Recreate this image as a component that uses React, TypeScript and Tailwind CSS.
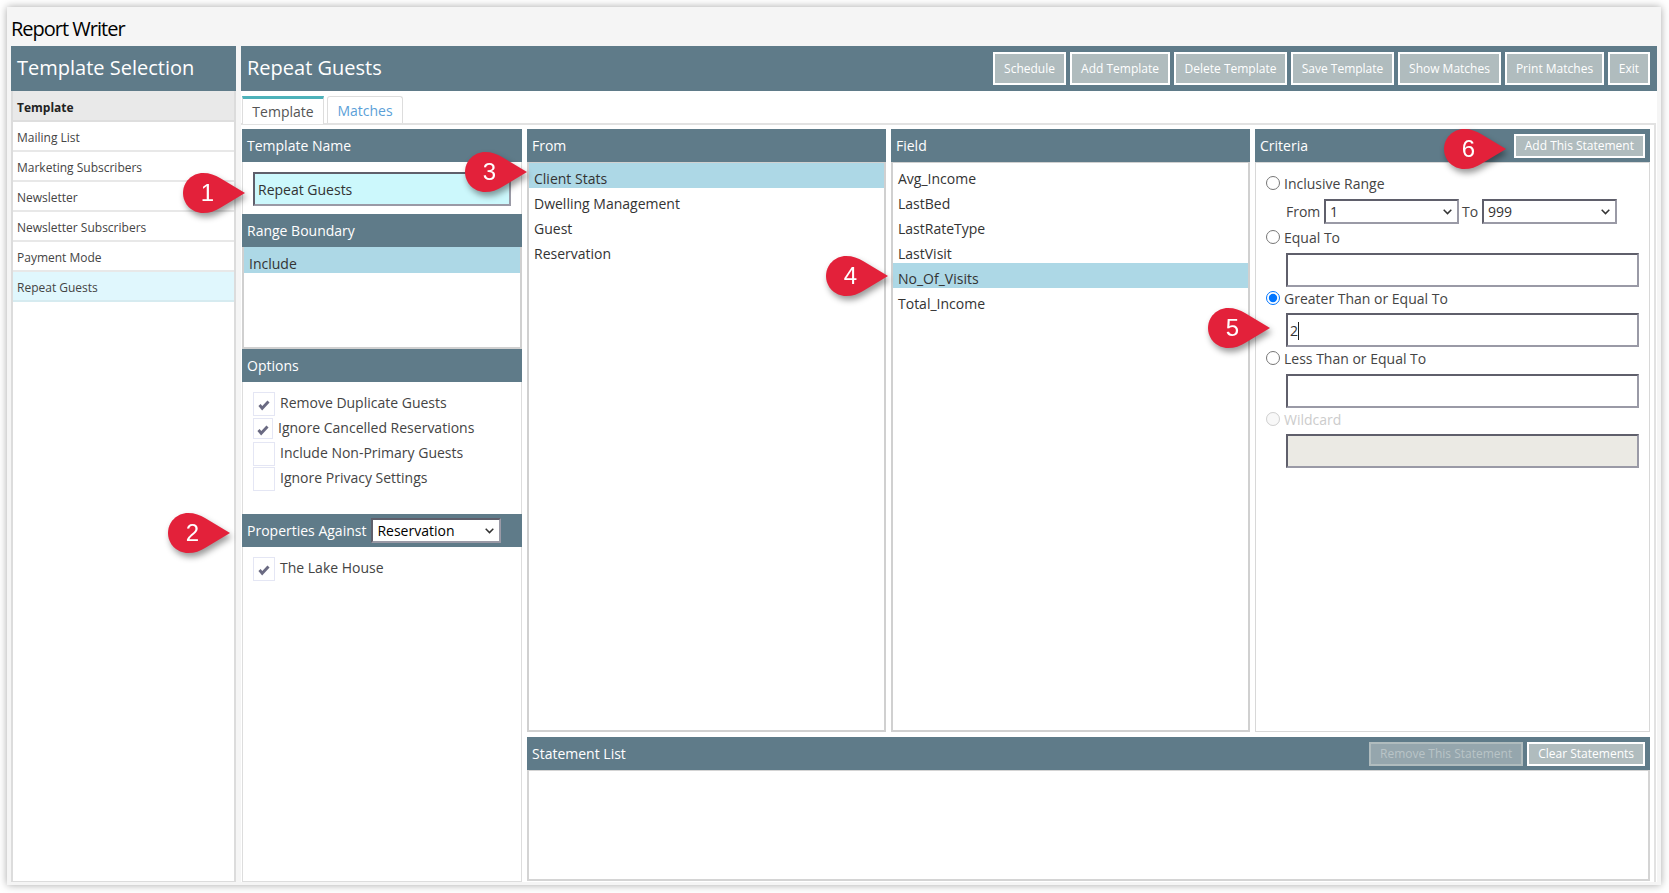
import React from "react";

const sidebarItems = [
  "Mailing List",
  "Marketing Subscribers",
  "Newsletter",
  "Newsletter Subscribers",
  "Payment Mode",
];
const topButtons = [
  { label: "Schedule", w: "w-[73px]" },
  { label: "Add Template", w: "w-[100px]" },
  { label: "Delete Template", w: "w-[113px]" },
  { label: "Save Template", w: "w-[103px]" },
  { label: "Show Matches", w: "w-[103px]" },
  { label: "Print Matches", w: "w-[99px]" },
  { label: "Exit", w: "w-[42px]" },
];
const fromItems = ["Client Stats", "Dwelling Management", "Guest", "Reservation"];
const fieldItems = ["Avg_Income", "LastBed", "LastRateType", "LastVisit", "No_Of_Visits", "Total_Income"];

const pins = [
  { n: 1, pos: "left-[183px] top-[173px]" },
  { n: 2, pos: "left-[168px] top-[513px]" },
  { n: 3, pos: "left-[465px] top-[152px]" },
  { n: 4, pos: "left-[826px] top-[256px]" },
  { n: 5, pos: "left-[1208px] top-[308px]" },
  { n: 6, pos: "left-[1444px] top-[129px]" },
];

const inputBorder = "border-2 border-t-[#5f5f6b] border-l-[#5f5f6b] border-b-[#9a9aa6] border-r-[#9a9aa6]";

const SmallBtn = ({ label, disabled }: { label: string; disabled?: boolean }) => (
  <button
    className={
      disabled
        ? "h-[24px] px-[9px] border-2 border-[#b0bcbe] bg-[#95a6ad] text-[12px] text-[#b9c4c7] whitespace-nowrap"
        : "h-[24px] px-[9px] border-2 border-white bg-[#b0bcbe] text-[12px] text-white whitespace-nowrap"
    }
  >
    {label}
  </button>
);

const SectionHeader = ({ children }: { children: React.ReactNode }) => (
  <div className="h-[33px] shrink-0 flex items-center justify-between bg-[#5f7b89] pl-[5px] pr-[5px] text-[14px] text-white">
    {children}
  </div>
);

const CheckRow = ({ label, checked, small }: { label: string; checked?: boolean; small?: boolean }) => (
  <div className="h-[25px] flex items-center">
    <div
      className={
        small
          ? "w-[20px] h-[21px] flex items-center justify-center border border-[#e4e6f4] bg-white"
          : "w-[22px] h-[24px] flex items-center justify-center border border-[#e4e6f4] bg-white"
      }
    >
      {checked && (
        <svg width="14" height="14" viewBox="0 0 14 14" className="mt-[3px]">
          <path d="M2.5 7 L5.2 10.2 L11.5 3.5" fill="none" stroke="#6a6a82" strokeWidth="2.9" />
        </svg>
      )}
    </div>
    <span className="ml-[5px] pb-[2px] text-[14px] text-[#444]">{label}</span>
  </div>
);

const ListRow = ({ label, active }: { label: string; active?: boolean }) => (
  <div className={active ? "h-[25px] pl-[5px] pt-[6px] leading-[20px] bg-[#add8e6] text-[#333]" : "h-[25px] pl-[5px] pt-[6px] leading-[20px] text-[#333]"}>
    {label}
  </div>
);

const Radio = ({ label, checked, disabled }: { label: string; checked?: boolean; disabled?: boolean }) => (
  <label className={disabled ? "h-[22px] flex items-center gap-[4px] text-[#ccc]" : "h-[22px] flex items-center gap-[4px] text-[#444]"}>
    <input type="radio" name="criteria" defaultChecked={checked} disabled={disabled} className="w-[14px] h-[14px]" />
    {label}
  </label>
);

const Select = ({ value, width, color }: { value: string; width: string; color: string }) => (
  <div className={`relative ${width} h-[25px] shrink-0`}>
    <select className={`appearance-none block w-full h-full pl-[4px] bg-white ${color} ${inputBorder}`} defaultValue={value}>
      <option>{value}</option>
    </select>
    <svg width="9" height="6" viewBox="0 0 9 6" className="absolute right-[7px] top-[10px] pointer-events-none">
      <path d="M0.7 0.8 L4.5 4.6 L8.3 0.8" fill="none" stroke="#333" strokeWidth="1.5" />
    </svg>
  </div>
);

const Pin = ({ n, pos }: { n: number; pos: string }) => (
  <div className={`absolute ${pos} w-[63px] h-[40px] drop-shadow-[2px_4px_3px_rgba(0,0,0,0.4)]`}>
    <svg width="63" height="40" viewBox="0 0 63 40" className="absolute left-0 top-0">
      <path
        d="M20 0 C27 0 32 2 37 5 L62 20 L37 35 C32 38 27 40 20 40 C9 40 0 31 0 20 C0 9 9 0 20 0 Z"
        fill="#e3213a"
      />
    </svg>
    <div className="absolute left-0 top-0 w-[49px] h-[40px] flex items-center justify-center font-['Liberation_Sans',sans-serif] text-[24px] text-white">
      {n}
    </div>
  </div>
);

const App: React.FC = () => {
  return (
    <div className="relative w-[1669px] h-[893px] pt-[7px] pl-[7px] bg-white overflow-hidden font-['Open_Sans',sans-serif] text-[14px] text-[#333]">
      <div className="w-[1654px] h-[878px] bg-[#f5f5f5] shadow-[0_0_8px_rgba(0,0,0,0.35)]">
        <div className="h-[39px] pl-[4px] pt-[8px] leading-[28px] text-[20px] tracking-[-1px] text-black">Report Writer</div>

        <div className="flex h-[836px] pl-[4px] gap-[5px]">
          {/* left list */}
          <div className="w-[225px] shrink-0 flex flex-col">
            <div className="h-[45px] shrink-0 flex items-center pl-[6px] pb-[2px] bg-[#5f7b89] text-[20px] text-white">Template Selection</div>
            <div className="flex-1 bg-white border-x-2 border-b border-[#dcdcdc] text-[12px] text-[#444]">
              <div className="h-[31px] pl-[4px] pt-[4px] flex items-center bg-[#e9e9e9] border-b-2 border-[#dedede] font-bold text-[#222]">Template</div>
              {sidebarItems.map((item) => (
                <div key={item} className="h-[30px] pl-[4px] pt-[3px] flex items-center border-b-2 border-[#e8e8e8]">
                  {item}
                </div>
              ))}
              <div className="h-[30px] pl-[4px] pt-[3px] flex items-center bg-[#e0f7fd] border-b-2 border-[#d6ebf0]">Repeat Guests</div>
            </div>
          </div>

          {/* main */}
          <div className="w-[1416px] shrink-0 flex flex-col bg-white">
            <div className="h-[45px] shrink-0 flex items-center justify-between pl-[6px] pr-[7px] bg-[#5f7b89]">
              <div className="pb-[2px] text-[20px] text-white">Repeat Guests</div>
              <div className="flex gap-[4px]">
                {topButtons.map((b) => (
                  <button key={b.label} className={`${b.w} h-[33px] border-2 border-white bg-[#b0bcbe] text-[12px] text-white whitespace-nowrap`}>
                    {b.label}
                  </button>
                ))}
              </div>
            </div>

            <div className="h-[32px] shrink-0 flex items-end pl-[1px] gap-[3px]">
              <div className="relative top-[1px] w-[82px] h-[28px] flex items-center justify-center border-x border-[#ddd] border-t-[3px] border-t-[#4db2ba] bg-white text-[#555]">Template</div>
              <div className="w-[76px] h-[27px] flex items-center justify-center border border-b-0 border-[#ddd] rounded-t-[3px] text-[#5b9fd8]">Matches</div>
            </div>

            <div className="flex-1 flex mr-[1px] pt-[4px] pl-[1px] gap-[5px] border-t-2 border-r-2 border-[#e2e2e2]">
              {/* settings column */}
              <div className="w-[280px] shrink-0 flex flex-col">
                <SectionHeader>Template Name</SectionHeader>
                <div className="h-[52px] shrink-0 pt-[10px] pl-[10px] border-x border-[#ddd]">
                  <input
                    defaultValue="Repeat Guests"
                    className={`w-[258px] h-[34px] px-[3px] bg-[#ccf8fc] text-[#333] ${inputBorder}`}
                  />
                </div>
                <SectionHeader>Range Boundary</SectionHeader>
                <div className="h-[102px] shrink-0 border-x-2 border-b-2 border-[#d0d0d0]">
                  <div className="h-[26px] pl-[5px] pt-[7px] leading-[20px] bg-[#add8e6] text-[#333]">Include</div>
                </div>
                <SectionHeader>Options</SectionHeader>
                <div className="h-[132px] shrink-0 pt-[9px] pl-[10px] border-x border-[#ddd]">
                  <CheckRow label="Remove Duplicate Guests" checked />
                  <CheckRow label="Ignore Cancelled Reservations" checked small />
                  <CheckRow label="Include Non-Primary Guests" />
                  <CheckRow label="Ignore Privacy Settings" />
                </div>
                <div className="h-[33px] shrink-0 flex items-center bg-[#5f7b89] pl-[5px] text-white">
                  <span>Properties Against</span>
                  <div className="ml-[5px]">
                    <Select value="Reservation" width="w-[130px]" color="text-black" />
                  </div>
                </div>
                <div className="flex-1 pt-[9px] pl-[10px] border-x border-b border-[#ddd]">
                  <CheckRow label="The Lake House" checked />
                </div>
              </div>

              {/* query columns */}
              <div className="w-[1123px] shrink-0 flex flex-col gap-[5px]">
                <div className="h-[603px] shrink-0 flex gap-[5px]">
                  <div className="w-[359px] flex flex-col">
                    <SectionHeader>From</SectionHeader>
                    <div className="flex-1 border-2 border-t border-[#d0d0d0]">
                      {fromItems.map((item, i) => (
                        <ListRow key={item} label={item} active={i === 0} />
                      ))}
                    </div>
                  </div>
                  <div className="w-[359px] flex flex-col">
                    <SectionHeader>Field</SectionHeader>
                    <div className="flex-1 border-2 border-t border-[#d0d0d0]">
                      {fieldItems.map((item) => (
                        <ListRow key={item} label={item} active={item === "No_Of_Visits"} />
                      ))}
                    </div>
                  </div>
                  <div className="w-[395px] flex flex-col">
                    <SectionHeader>
                      <span>Criteria</span>
                      <SmallBtn label="Add This Statement" />
                    </SectionHeader>
                    <div className="flex-1 pl-[10px] pt-[9px] border border-[#d8d8d8]">
                      <Radio label="Inclusive Range" />
                      <div className="mt-[5px] pl-[20px] flex items-center text-[#444]">
                        <span className="w-[38px]">From</span>
                        <Select value="1" width="w-[135px]" color="text-[#333]" />
                        <span className="w-[23px] pl-[3px]">To</span>
                        <Select value="999" width="w-[135px]" color="text-[#333]" />
                      </div>
                      <div className="mt-[2px]">
                        <Radio label="Equal To" />
                      </div>
                      <input className={`block mt-[5px] ml-[20px] w-[353px] h-[34px] px-[2px] bg-white ${inputBorder}`} />
                      <Radio label="Greater Than or Equal To" checked />
                      <div className="relative mt-[4px] ml-[20px] w-[353px]">
                        <input defaultValue="2" className={`block w-[353px] h-[34px] px-[2px] bg-white text-[#333] ${inputBorder}`} />
                        <div className="absolute left-[12px] top-[9px] w-[1px] h-[18px] bg-[#222]"></div>
                      </div>
                      <Radio label="Less Than or Equal To" />
                      <input className={`block mt-[5px] ml-[20px] w-[353px] h-[34px] px-[2px] bg-white ${inputBorder}`} />
                      <Radio label="Wildcard" disabled />
                      <input disabled className={`block mt-[4px] ml-[20px] w-[353px] h-[34px] px-[2px] bg-[#ebeae4] ${inputBorder}`} />
                    </div>
                  </div>
                </div>

                <div className="flex-1 flex flex-col mb-[1px]">
                  <SectionHeader>
                    <span>Statement List</span>
                    <div className="flex gap-[4px]">
                      <SmallBtn label="Remove This Statement" disabled />
                      <SmallBtn label="Clear Statements" />
                    </div>
                  </SectionHeader>
                  <div className="flex-1 border-2 border-t border-[#d4d4d4]"></div>
                </div>
              </div>
            </div>
          </div>
        </div>
      </div>

      {pins.map((p) => (
        <Pin key={p.n} n={p.n} pos={p.pos} />
      ))}
    </div>
  );
};

export default App;
